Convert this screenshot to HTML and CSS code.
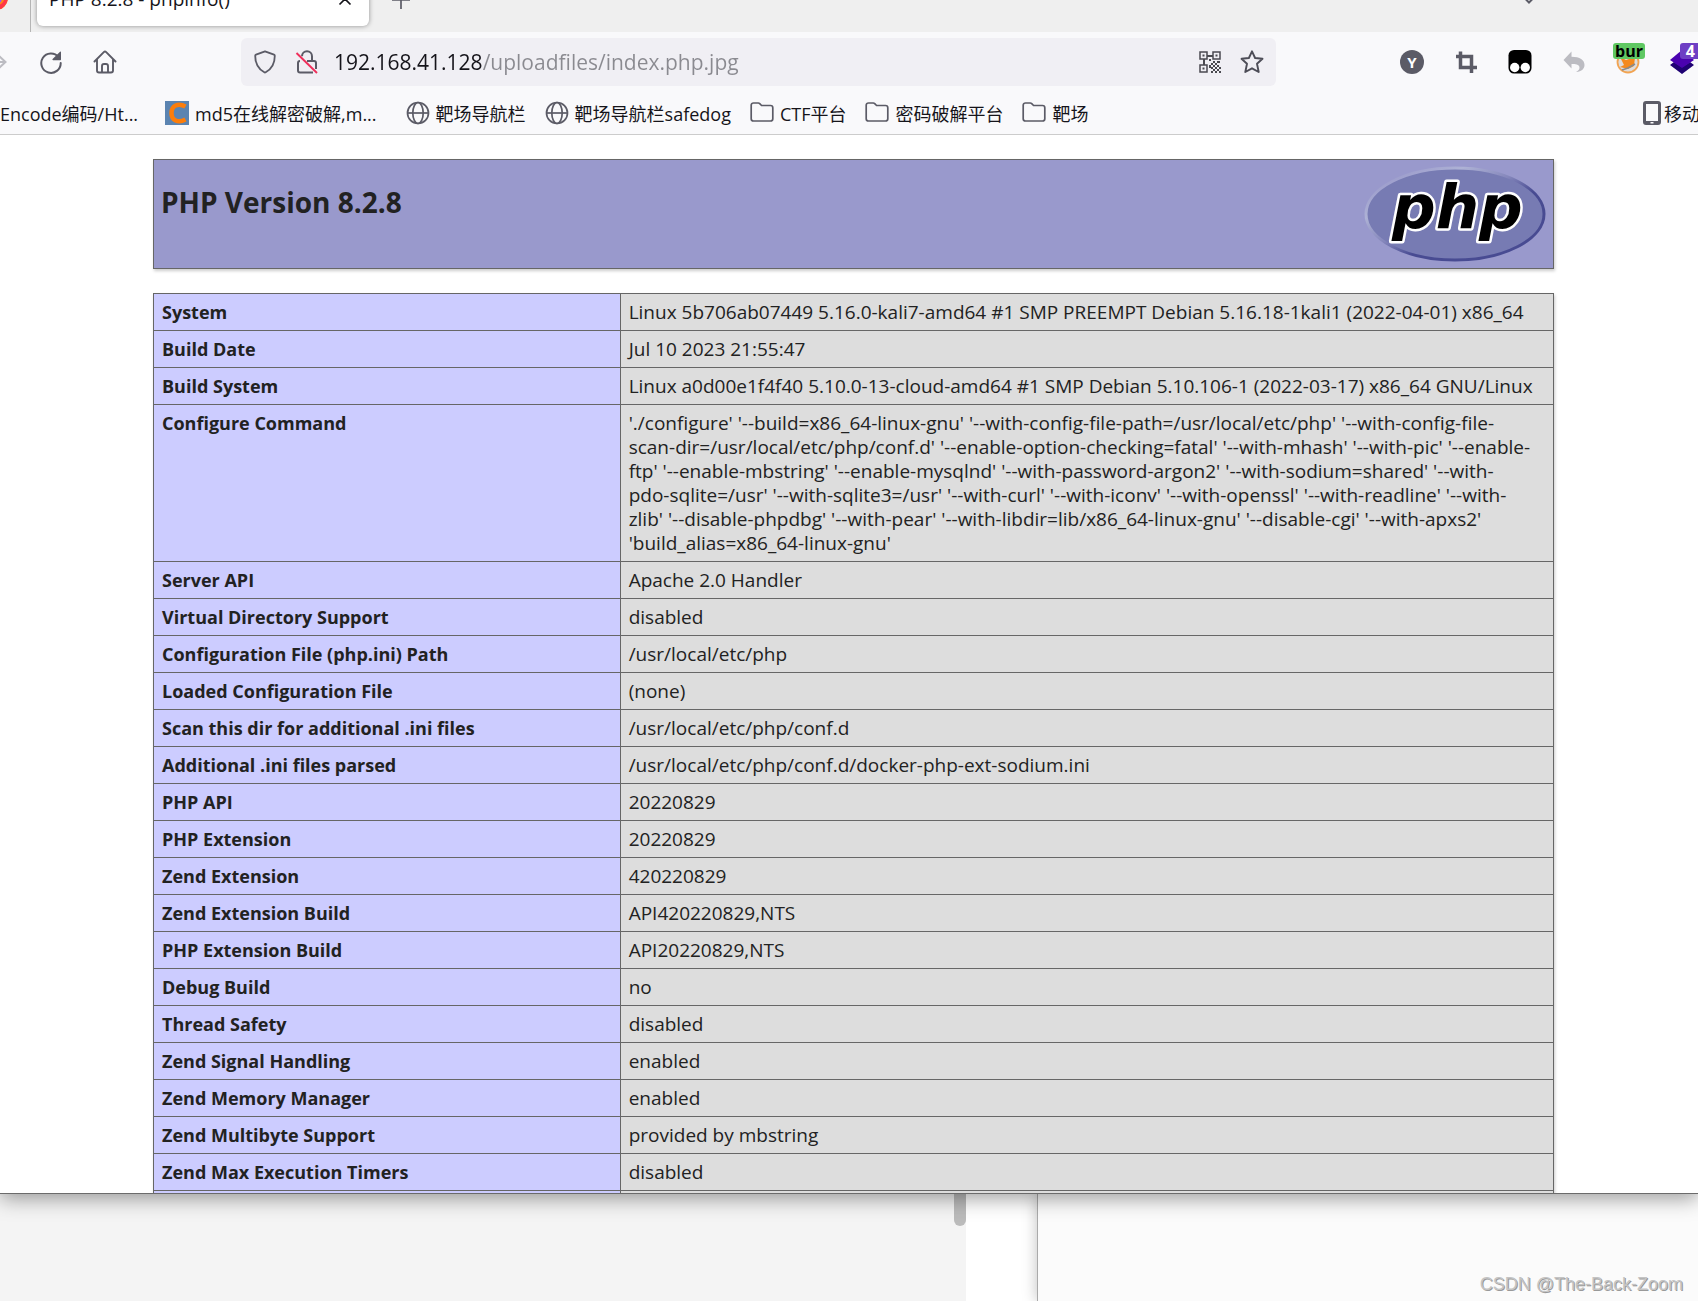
FILE: index.html
```html
<!DOCTYPE html>
<html lang="zh-CN">
<head>
<meta charset="utf-8">
<title>PHP 8.2.8 - phpinfo()</title>
<link rel="stylesheet" href="styles.css">
</head>
<body>
<svg class="sprite" aria-hidden="true">
  <symbol id="globe" viewBox="0 0 24 24"><g fill="none" stroke="#5b5b66" stroke-width="1.7"><circle cx="12" cy="12" r="10.5"/><ellipse cx="12" cy="12" rx="5.2" ry="10.5"/><path d="M1.5 12h21"/></g></symbol>
  <symbol id="folder" viewBox="0 0 24 24"><path d="M3.500 2h4.800c.6 0 1 .2 1.400.6L11.600 4.500h8.900c1.300 0 2.300 1 2.300 2.300v10.900c0 1.300-1 2.300-2.300 2.300h-17c-1.300 0-2.300-1-2.300-2.300V4.300C1.200 3 2.200 2 3.500 2z" fill="none" stroke="#5b5b66" stroke-width="1.700"/></symbol>
</svg>

<div class="window">
  <div class="tabs">
    <svg class="firefox" viewBox="0 0 24 24" aria-hidden="true"><circle cx="12" cy="12" r="12" fill="#ff8a16"/><path d="M22 5c2 5 2.500 9 0 13s-6 6-10 6c-4 0-8-2-10-5 5 2 13 2 17-3 2-3 3-7 3-11z" fill="#ff3647"/><circle cx="12" cy="12" r="6" fill="#9059ff"/></svg>
    <span class="divider"></span>
    <div class="tab">
      <span class="tab-title">PHP 8.2.8 - phpinfo()</span>
      <button class="plain" aria-label="Close tab"><svg width="14" height="14" viewBox="0 0 14 14"><path d="M1.500 1.500l11 11m0-11l-11 11" stroke="#15141a" stroke-width="1.700"/></svg></button>
    </div>
    <button class="plain new-tab" aria-label="New tab"><svg width="18" height="18" viewBox="0 0 18 18"><path d="M9 0v18M0 9h18" stroke="#5b5b66" stroke-width="1.700"/></svg></button>
    <button class="plain all-tabs" aria-label="List all tabs"><svg width="16" height="16" viewBox="0 0 16 16"><path d="M2 5.500l6 6 6-6" fill="none" stroke="#5b5b66" stroke-width="2"/></svg></button>
  </div>

  <div class="nav">
    <div class="nav-group">
      <button class="tool" aria-label="Forward"><svg viewBox="0 0 24 24"><path d="M0 12h20M13 5l7.500 7-7.500 7" fill="none" stroke="#bcbcc2" stroke-width="2"/></svg></button>
      <button class="tool" aria-label="Reload"><svg viewBox="0 0 24 24"><path d="M19.500 7A9.700 9.700 0 1 0 21.700 13" fill="none" stroke="#5b5b66" stroke-width="2" stroke-linecap="round"/><path d="M22 2.200v7.300c0 .4-.3.700-.7.700h-7.200c-.6 0-.9-.7-.5-1.100L21 1.700c.4-.4 1-.1 1 .5z" fill="#5b5b66"/></svg></button>
      <button class="tool" aria-label="Home"><svg viewBox="0 0 24 24"><path d="M1.500 11.500L10.800 2.100c.7-.7 1.700-.7 2.400 0l9.300 9.400M4 9.500V20.500c0 1.100.9 2 2 2h12c1.100 0 2-.9 2-2V9.500M9 22v-6c0-1.100.9-2 2-2h2c1.100 0 2 .9 2 2v6" fill="none" stroke="#5b5b66" stroke-width="1.900" stroke-linecap="round"/></svg></button>
    </div>
    <div class="urlbar">
      <button class="plain" aria-label="Tracking protection"><svg viewBox="0 0 24 24"><path d="M12 1.300l9 3.400c.5.200.8.600.8 1.100 0 7.500-3 13.200-9.100 16.500-.5.300-1 .3-1.400 0C5.200 19 2.200 13.300 2.200 5.800c0-.5.300-.9.800-1.100z" fill="none" stroke="#5b5b66" stroke-width="1.800" stroke-linejoin="round"/></svg></button>
      <button class="plain" aria-label="Connection not secure"><svg viewBox="0 0 24 24"><path d="M7 6.200C7 3.400 9.200 1.200 12 1.200s5 2.200 5 5V11M5 11c-1.100 0-2 .9-2 2v7.500c0 1.100.9 2 2 2h13M12 11h7c1.100 0 2 .9 2 2v6" fill="none" stroke="#5b5b66" stroke-width="2"/><path d="M1.500 3L22 23" stroke="#ef2f5b" stroke-width="1.900"/></svg></button>
      <input class="address" type="text" aria-label="Address" value="192.168.41.128/uploadfiles/index.php.jpg">
      <button class="plain" aria-label="QR code"><svg viewBox="0 0 24 24"><g transform="translate(1 1)"><g fill="none" stroke="#4a4a50" stroke-width="1.500"><path d="M1 1h7v7H1zM14 1h7v7h-7zM1 14h7v7H1z"/></g><path fill="#4a4a50" d="M3.500 3.500h2v2h-2zM16.500 3.500h2v2h-2zM3.500 16.500h2v2h-2zM8 4h6v2H8zM4 8h2v6H4zM10 8h2v2h-2zM14 10h2v2h-2zM18 10h3v2h-3zM12 12h2v2h-2zM16 12h2v2h-2zM10 14h2v3h-2zM14 14h2v2h-2zM18 14h2v2h-2zM12 16h2v2h-2zM16 16h2v2h-2zM20 16h2v2h-2zM14 18h2v2h-2zM18 18h2v2h-2zM12 20h2v2h-2zM16 20h2v2h-2zM20 20h2v2h-2z"/></g></svg></button>
      <button class="plain" aria-label="Bookmark this page"><svg viewBox="0 0 24 24"><path d="M12 1.300l3.100 6.700 7.400.8-5.500 5 1.700 8.200-6.700-3.700L5.300 22 7 13.800l-5.500-5L8.900 8z" fill="none" stroke="#4d4d57" stroke-width="1.900" stroke-linejoin="round"/></svg></button>
    </div>
    <div class="nav-group extensions">
      <button class="tool" aria-label="Proxy"><span class="round">Y</span></button>
      <button class="tool" aria-label="Crop"><svg viewBox="0 0 24 24"><path d="M2 6.500h15.500V23M6.500 1.500v16H23" fill="none" stroke="#5b5b66" stroke-width="3.500"/></svg></button>
      <button class="tool" aria-label="Tampermonkey"><svg viewBox="0 0 24 24"><rect x=".5" y="0" width="23" height="23.500" rx="5.500"/><circle cx="6.700" cy="17.500" r="4.700" fill="#fff"/><circle cx="17.300" cy="17.500" r="4.700" fill="#fff"/></svg></button>
      <button class="tool" aria-label="Undo"><svg viewBox="0 0 24 24"><path d="M9.500 1.500v5.300C18 6.800 22.500 10 22.500 15c0 3.500-2.500 6.500-8.500 7 3-1.500 4-3.500 3.300-5.500-.8-2-3.300-2.500-7.800-2.500v4.500L1.500 10z" fill="#bcbcc2"/></svg></button>
      <button class="tool" aria-label="Burp"><svg viewBox="0 0 24 24"><circle cx="12" cy="12" r="10.500" fill="#ddd" stroke="#f2a452" stroke-width="1.800"/><path d="M4 7l6 3 9-3-1 9-6 3-8-2 4-2z" fill="#f48a1d"/><path d="M6 20l6-2 7-4" fill="none" stroke="#8a8a8a" stroke-width="1.500"/></svg><span class="badge green">bur</span></button>
      <button class="tool" aria-label="Layers"><svg viewBox="0 0 24 24"><path d="M0 15l4-3 8 5 8-5 4 3-12 9z" fill="#1f0273"/><path d="M12 0l12 10-12 8L0 10z" fill="#4a02b0"/></svg><span class="badge purple">4</span></button>
    </div>
  </div>

  <nav class="bookmarks">
    <a href="#">Encode编码/Ht...</a>
    <a href="#" class="site"><svg viewBox="0 0 24 24"><path d="M0 0h24v24H0z" fill="#5b84b1"/><path d="M20.500 5.500C13 1.500 6.500 4.500 6.500 12s6.500 10.500 14 6.500" fill="none" stroke="#fc7d0a" stroke-width="4.500"/></svg>md5在线解密破解,m...</a>
    <a href="#"><svg><use href="#globe"/></svg>靶场导航栏</a>
    <a href="#"><svg><use href="#globe"/></svg>靶场导航栏safedog</a>
    <a href="#"><svg><use href="#folder"/></svg>CTF平台</a>
    <a href="#"><svg><use href="#folder"/></svg>密码破解平台</a>
    <a href="#"><svg><use href="#folder"/></svg>靶场</a>
    <a href="#" class="mobile"><svg viewBox="0 0 18 24"><path d="M3 0h12a3 3 0 0 1 3 3v18a3 3 0 0 1-3 3H3a3 3 0 0 1-3-3V3a3 3 0 0 1 3-3zm0 3v17h12V3zm4.500 18v1.500h3V21z" fill="#5b5b66" fill-rule="evenodd"/></svg>移动</a>
  </nav>

  <main class="page">
    <header class="banner">
      <h1>PHP Version 8.2.8</h1>
      <svg class="logo" viewBox="0 0 182 96" role="img" aria-label="PHP logo">
        <defs><linearGradient id="rim" x1="0" y1="0" x2="1" y2="1"><stop offset=".1" stop-color="#9a9acb"/><stop offset=".27" stop-color="#aeb2d5"/><stop offset=".45" stop-color="#8486bb"/><stop offset=".6" stop-color="#484b92"/><stop offset="1" stop-color="#484b92"/></linearGradient></defs>
        <ellipse cx="91" cy="48" rx="89" ry="46" fill="#777bb3" stroke="url(#rim)" stroke-width="3"/>
        <text x="28" y="62" class="logo-text">php</text>
      </svg>
    </header>
    <table class="info">
      <tbody>
        <tr><th scope="row">System</th><td>Linux 5b706ab07449 5.16.0-kali7-amd64 #1 SMP PREEMPT Debian 5.16.18-1kali1 (2022-04-01) x86_64</td></tr>
        <tr><th scope="row">Build Date</th><td>Jul 10 2023 21:55:47</td></tr>
        <tr><th scope="row">Build System</th><td>Linux a0d00e1f4f40 5.10.0-13-cloud-amd64 #1 SMP Debian 5.10.106-1 (2022-03-17) x86_64 GNU/Linux</td></tr>
        <tr><th scope="row">Configure Command</th><td>'./configure' '--build=x86_64-linux-gnu' '--with-config-file-path=/usr/local/etc/php' '--with-config-file-<br>scan-dir=/usr/local/etc/php/conf.d' '--enable-option-checking=fatal' '--with-mhash' '--with-pic' '--enable-<br>ftp' '--enable-mbstring' '--enable-mysqlnd' '--with-password-argon2' '--with-sodium=shared' '--with-<br>pdo-sqlite=/usr' '--with-sqlite3=/usr' '--with-curl' '--with-iconv' '--with-openssl' '--with-readline' '--with-<br>zlib' '--disable-phpdbg' '--with-pear' '--with-libdir=lib/x86_64-linux-gnu' '--disable-cgi' '--with-apxs2'<br>'build_alias=x86_64-linux-gnu'</td></tr>
        <tr><th scope="row">Server API</th><td>Apache 2.0 Handler</td></tr>
        <tr><th scope="row">Virtual Directory Support</th><td>disabled</td></tr>
        <tr><th scope="row">Configuration File (php.ini) Path</th><td>/usr/local/etc/php</td></tr>
        <tr><th scope="row">Loaded Configuration File</th><td>(none)</td></tr>
        <tr><th scope="row">Scan this dir for additional .ini files</th><td>/usr/local/etc/php/conf.d</td></tr>
        <tr><th scope="row">Additional .ini files parsed</th><td>/usr/local/etc/php/conf.d/docker-php-ext-sodium.ini</td></tr>
        <tr><th scope="row">PHP API</th><td>20220829</td></tr>
        <tr><th scope="row">PHP Extension</th><td>20220829</td></tr>
        <tr><th scope="row">Zend Extension</th><td>420220829</td></tr>
        <tr><th scope="row">Zend Extension Build</th><td>API420220829,NTS</td></tr>
        <tr><th scope="row">PHP Extension Build</th><td>API20220829,NTS</td></tr>
        <tr><th scope="row">Debug Build</th><td>no</td></tr>
        <tr><th scope="row">Thread Safety</th><td>disabled</td></tr>
        <tr><th scope="row">Zend Signal Handling</th><td>enabled</td></tr>
        <tr><th scope="row">Zend Memory Manager</th><td>enabled</td></tr>
        <tr><th scope="row">Zend Multibyte Support</th><td>provided by mbstring</td></tr>
        <tr><th scope="row">Zend Max Execution Timers</th><td>disabled</td></tr>
        <tr><th scope="row"></th><td></td></tr>
      </tbody>
    </table>
  </main>
</div>

<div class="behind">
  <div class="pane-left"><span class="thumb"></span></div>
  <div class="pane-gap"></div>
  <div class="pane-right"></div>
  <span class="watermark">CSDN @The-Back-Zoom</span>
</div>
</body>
</html>
```
FILE: styles.css
```css
* { box-sizing: border-box; }

body {
  margin: 0;
  height: 100vh;
  display: flex;
  flex-direction: column;
  overflow: hidden;
  font-family: "Open Sans", "Noto Sans CJK SC", sans-serif;
  font-size: 18px;
  color: #222;
  background: #fff;
}

button { font: inherit; border: 0; padding: 0; background: none; color: inherit; }
.sprite { display: none; }
svg { display: block; flex: none; }
.plain { display: flex; }

.window {
  flex: 1;
  min-height: 0;
  display: flex;
  flex-direction: column;
  overflow: hidden;
  position: relative;
  z-index: 1;
  background: #fff;
  border-bottom: 1px solid #6b6b6b;
  box-shadow: 0 4px 20px rgba(0, 0, 0, .4);
}

/* Tab strip */
.tabs {
  flex: none;
  height: 32px;
  display: flex;
  align-items: flex-end;
  overflow: hidden;
  background: #efefef;
}
.firefox { width: 24px; height: 24px; margin: 0 0 22px -16px; }
.divider { width: 1px; height: 32px; margin-left: 22px; background: #b5b5b5; }
.tab {
  width: 332px;
  height: 54px;
  margin: 0 0 6px 6px;
  padding: 0 17px 0 12px;
  display: flex;
  flex: none;
  align-items: center;
  justify-content: space-between;
  border-radius: 6px;
  background: #fff;
  box-shadow: 0 0 5px rgba(0, 0, 0, .4);
  color: #15141a;
}
.tab-title { font-size: 19px; }
.new-tab { margin: 0 0 23px 23px; }
.all-tabs { margin: 0 161px 25px auto; }

/* Navigation toolbar */
.nav {
  flex: none;
  height: 60px;
  display: flex;
  align-items: center;
  background: #f9f9fb;
}
.nav-group { display: flex; flex: none; margin-left: -30px; }
.tool {
  width: 54px;
  height: 48px;
  display: flex;
  flex: none;
  align-items: center;
  justify-content: center;
  position: relative;
}
.tool svg, .urlbar svg { width: 24px; height: 24px; }
.urlbar {
  flex: 1;
  min-width: 0;
  height: 48px;
  margin: 0 109px;
  padding: 0 12px;
  display: flex;
  align-items: center;
  gap: 18px;
  border-radius: 6px;
  background: #f0eff4;
}
.address {
  flex: 1;
  min-width: 0;
  margin-left: -3px;
  padding: 0;
  border: 0;
  font: inherit;
  font-size: 21px;
  line-height: 30px;
  color: transparent;
  background: linear-gradient(90deg, #15141a 149px, #8a8a90 149px);
  -webkit-background-clip: text;
  background-clip: text;
}
.extensions { margin: 0 -11px 0 0; }
.round {
  width: 24px;
  height: 24px;
  border-radius: 50%;
  background: #5b5b66;
  color: #fff;
  font-size: 15px;
  font-weight: 700;
  line-height: 24px;
  text-align: center;
}
.badge {
  position: absolute;
  top: 5px;
  right: 10px;
  height: 16px;
  padding: 0 2px;
  border-radius: 3px;
  font-size: 16px;
  font-weight: 700;
  line-height: 16px;
}
.green { background: #5fc862; color: #000; }
.purple { right: 8px; padding: 0 6px; background: #6e3fc4; color: #fff; }

/* Bookmarks toolbar */
.bookmarks {
  flex: none;
  height: 43px;
  display: flex;
  align-items: center;
  gap: 19px;
  overflow: hidden;
  background: #f9f9fb;
  border-bottom: 1px solid #ccc;
}
.bookmarks a {
  display: flex;
  flex: none;
  align-items: center;
  gap: 6px;
  color: #15141a;
  text-decoration: none;
  white-space: nowrap;
}
.bookmarks svg { width: 24px; height: 24px; }
.bookmarks .site { margin: 0 10px 0 8px; }
.bookmarks .mobile { gap: 3px; margin-left: auto; margin-right: -2px; }
.bookmarks .mobile svg { width: 18px; }

/* phpinfo page */
.page { flex: 1; min-height: 0; overflow: hidden; padding: 24px 24px 0 33px; }
.banner, .info {
  width: 100%;
  max-width: 1401px;
  margin: 0 auto 24px;
  border: 1px solid #666;
  box-shadow: 1px 2px 3px #ccc;
}
.banner {
  min-height: 110px;
  padding: 6px 7px;
  display: flex;
  align-items: flex-start;
  justify-content: space-between;
  background: #99c;
}
h1 { margin: 16px 0 0; font-size: 28px; line-height: 40px; }
.logo { width: 182px; height: 96px; }
.logo-text {
  font: italic 700 61px "DejaVu Sans", sans-serif;
  fill: #000;
  stroke: #fff;
  stroke-width: 5px;
  stroke-linejoin: round;
  paint-order: stroke;
}
.info { border-collapse: collapse; table-layout: fixed; }
.info th, .info td {
  height: 37px;
  padding: 6px 8px;
  border: 1px solid #666;
  text-align: left;
  vertical-align: baseline;
  line-height: 24px;
}
.info th { width: calc(100% / 3); background: #ccf; }
.info td { background: #ddd; font-size: 19px; }

/* Windows behind the browser */
.behind { flex: none; height: 107px; display: flex; position: relative; }
.pane-left { flex: 967; display: flex; justify-content: flex-end; background: #f4f4f4; }
.thumb { width: 12px; height: 32px; border-radius: 0 0 6px 6px; background: #bbb; }
.pane-gap { flex: 71; background: #fff; }
.pane-right {
  flex: 660;
  border-left: 1px solid #aaa;
  background: #fbfbfb;
  box-shadow: 0 0 14px rgba(0, 0, 0, .25);
}
.watermark {
  position: absolute;
  right: 15px;
  bottom: 6px;
  font-family: "Liberation Sans", sans-serif;
  font-size: 18px;
  line-height: 22px;
  color: #c4c4c4;
  text-shadow: 1px 1px 0 #999;
}
```
